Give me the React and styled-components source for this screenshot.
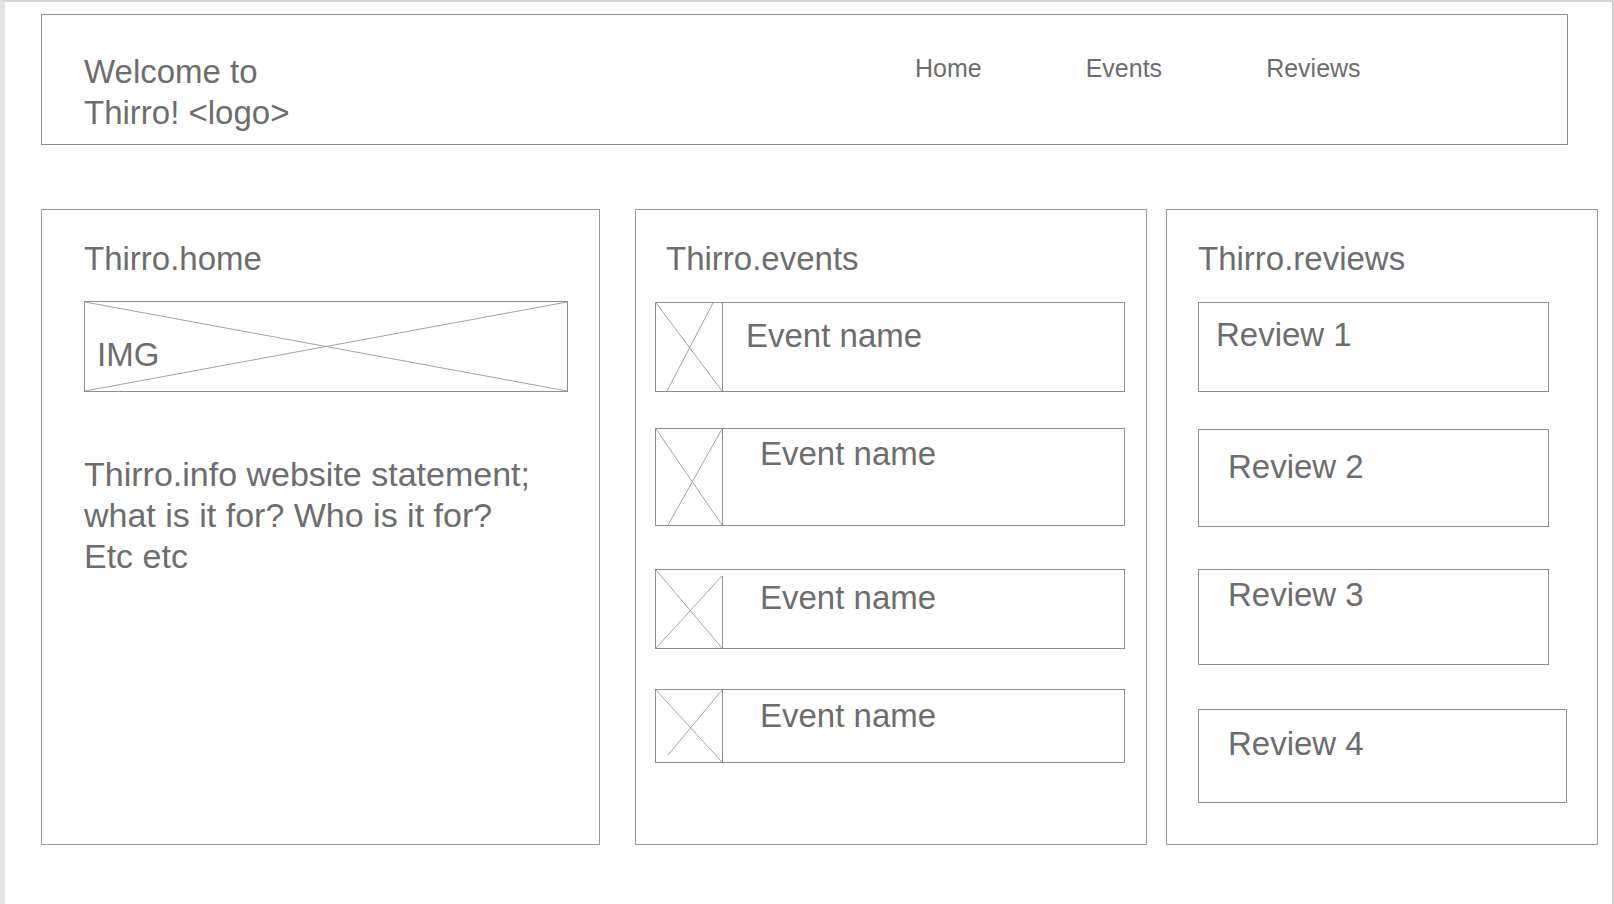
import React from 'react';
import styled, { createGlobalStyle } from 'styled-components';

const GlobalStyle = createGlobalStyle`
  html, body {
    margin: 0;
    padding: 0;
    background: #ffffff;
  }
  body {
    font-family: 'Liberation Sans', Arial, Helvetica, sans-serif;
    color: #6d6d6d;
  }
`;

const events = [
  { h: 90, mt: 23, textLeft: 23, textTop: 13, diag: [57, 0, 11, 88], rightTop: 0 },
  { h: 98, mt: 36, textLeft: 37, textTop: 5, diag: [66, 0, 12, 96], rightTop: 0 },
  { h: 80, mt: 43, textLeft: 37, textTop: 8, diag: [66, 6, 0, 78], rightTop: 6 },
  { h: 74, mt: 40, textLeft: 37, textTop: 6, diag: [66, 0, 12, 65], rightTop: 0 },
];

const reviews = [
  { label: 'Review 1', w: 351, h: 90, mt: 23, left: 17, top: 12 },
  { label: 'Review 2', w: 351, h: 98, mt: 37, left: 29, top: 17 },
  { label: 'Review 3', w: 351, h: 96, mt: 42, left: 29, top: 5 },
  { label: 'Review 4', w: 369, h: 94, mt: 44, left: 29, top: 14 },
];

const Thumb = ({ h, diag, rightTop }) => {
  const ih = h - 2;
  return (
    <ThumbSvg width="67" height={ih} viewBox={`0 0 67 ${ih}`}>
      <line x1="66.5" y1={rightTop} x2="66.5" y2={ih} stroke="#8e8e8e" strokeWidth="1" />
      <line x1="0" y1="0" x2="66" y2={ih} stroke="#a2a2a2" strokeWidth="1" />
      <line x1={diag[0]} y1={diag[1]} x2={diag[2]} y2={diag[3]} stroke="#a2a2a2" strokeWidth="1" />
    </ThumbSvg>
  );
};

const App = () => {
  return (
    <>
      <GlobalStyle />
      <Frame>
        <Header>
          <Brand>
            Welcome to
            <br />
            Thirro! &lt;logo&gt;
          </Brand>
          <Nav>
            <NavLink href="#">Home</NavLink>
            <NavLink href="#">Events</NavLink>
            <NavLink href="#">Reviews</NavLink>
          </Nav>
        </Header>

        <Main>
          <Panel $w={559} $pad={42}>
            <PanelTitle>Thirro.home</PanelTitle>
            <ImgBox>
              <Cross viewBox="0 0 482 89" preserveAspectRatio="none">
                <line x1="0" y1="0" x2="482" y2="89" stroke="#a2a2a2" strokeWidth="1" />
                <line x1="482" y1="0" x2="0" y2="89" stroke="#a2a2a2" strokeWidth="1" />
              </Cross>
              <ImgLabel>IMG</ImgLabel>
            </ImgBox>
            <Statement>
              Thirro.info website statement;
              <br />
              what is it for? Who is it for?
              <br />
              Etc etc
            </Statement>
          </Panel>

          <Panel $w={512} $ml={35} $pad={19}>
            <PanelTitle $indent={11}>Thirro.events</PanelTitle>
            {events.map((ev, i) => (
              <EventRow key={i} $h={ev.h} $mt={ev.mt}>
                <Thumb h={ev.h} diag={ev.diag} rightTop={ev.rightTop} />
                <EventName $left={ev.textLeft} $top={ev.textTop}>Event name</EventName>
              </EventRow>
            ))}
          </Panel>

          <Panel $w={432} $ml={19} $pad={31}>
            <PanelTitle>Thirro.reviews</PanelTitle>
            {reviews.map((r) => (
              <ReviewBox key={r.label} $w={r.w} $h={r.h} $mt={r.mt} $left={r.left} $top={r.top}>
                {r.label}
              </ReviewBox>
            ))}
          </Panel>
        </Main>
      </Frame>
    </>
  );
};

const Frame = styled.div`
  width: 1614px;
  height: 904px;
  box-sizing: border-box;
  border-top: 2px solid #d6d6d6;
  border-left: 5px solid #e3e3e3;
  border-right: 2px solid #cdcdcd;
  overflow: hidden;
`;

const Header = styled.header`
  display: flex;
  align-items: flex-start;
  box-sizing: border-box;
  width: 1527px;
  height: 131px;
  margin: 12px 0 0 36px;
  padding: 36px 0 0 42px;
  border: 1px solid #8e8e8e;
`;

const Brand = styled.div`
  flex: 0 0 831px;
  font-size: 33px;
  line-height: 41px;
`;

const Nav = styled.nav`
  display: flex;
  gap: 104px;
  margin-top: 2px;
`;

const NavLink = styled.a`
  font-size: 25px;
  line-height: 30px;
  color: #6d6d6d;
  text-decoration: none;
`;

const Main = styled.main`
  display: flex;
  align-items: flex-start;
  margin: 64px 0 0 36px;
`;

const Panel = styled.section`
  display: flex;
  flex-direction: column;
  align-items: flex-start;
  box-sizing: border-box;
  width: ${(p) => p.$w}px;
  height: 636px;
  margin-left: ${(p) => p.$ml || 0}px;
  padding: 29px 0 0 ${(p) => p.$pad}px;
  border: 1px solid #999999;
`;

const PanelTitle = styled.h2`
  margin: 0;
  padding-left: ${(p) => p.$indent || 0}px;
  font-size: 33px;
  font-weight: 400;
  line-height: 40px;
`;

const ImgBox = styled.div`
  position: relative;
  box-sizing: border-box;
  width: 484px;
  height: 91px;
  margin-top: 22px;
  padding: 33px 0 0 12px;
  border: 1px solid #8e8e8e;
`;

const Cross = styled.svg`
  position: absolute;
  inset: 0;
  width: 100%;
  height: 100%;
`;

const ImgLabel = styled.span`
  position: relative;
  display: block;
  font-size: 33px;
  line-height: 40px;
`;

const Statement = styled.p`
  margin: 62px 0 0;
  font-size: 34px;
  line-height: 41px;
`;

const EventRow = styled.div`
  display: flex;
  align-items: stretch;
  box-sizing: border-box;
  width: 470px;
  height: ${(p) => p.$h}px;
  margin-top: ${(p) => p.$mt}px;
  border: 1px solid #8e8e8e;
`;

const ThumbSvg = styled.svg`
  flex: 0 0 67px;
  display: block;
`;

const EventName = styled.div`
  padding: ${(p) => p.$top}px 0 0 ${(p) => p.$left}px;
  font-size: 33px;
  line-height: 40px;
`;

const ReviewBox = styled.div`
  box-sizing: border-box;
  width: ${(p) => p.$w}px;
  height: ${(p) => p.$h}px;
  margin-top: ${(p) => p.$mt}px;
  padding: ${(p) => p.$top}px 0 0 ${(p) => p.$left}px;
  border: 1px solid #8e8e8e;
  font-size: 33px;
  line-height: 40px;
`;

export default App;
